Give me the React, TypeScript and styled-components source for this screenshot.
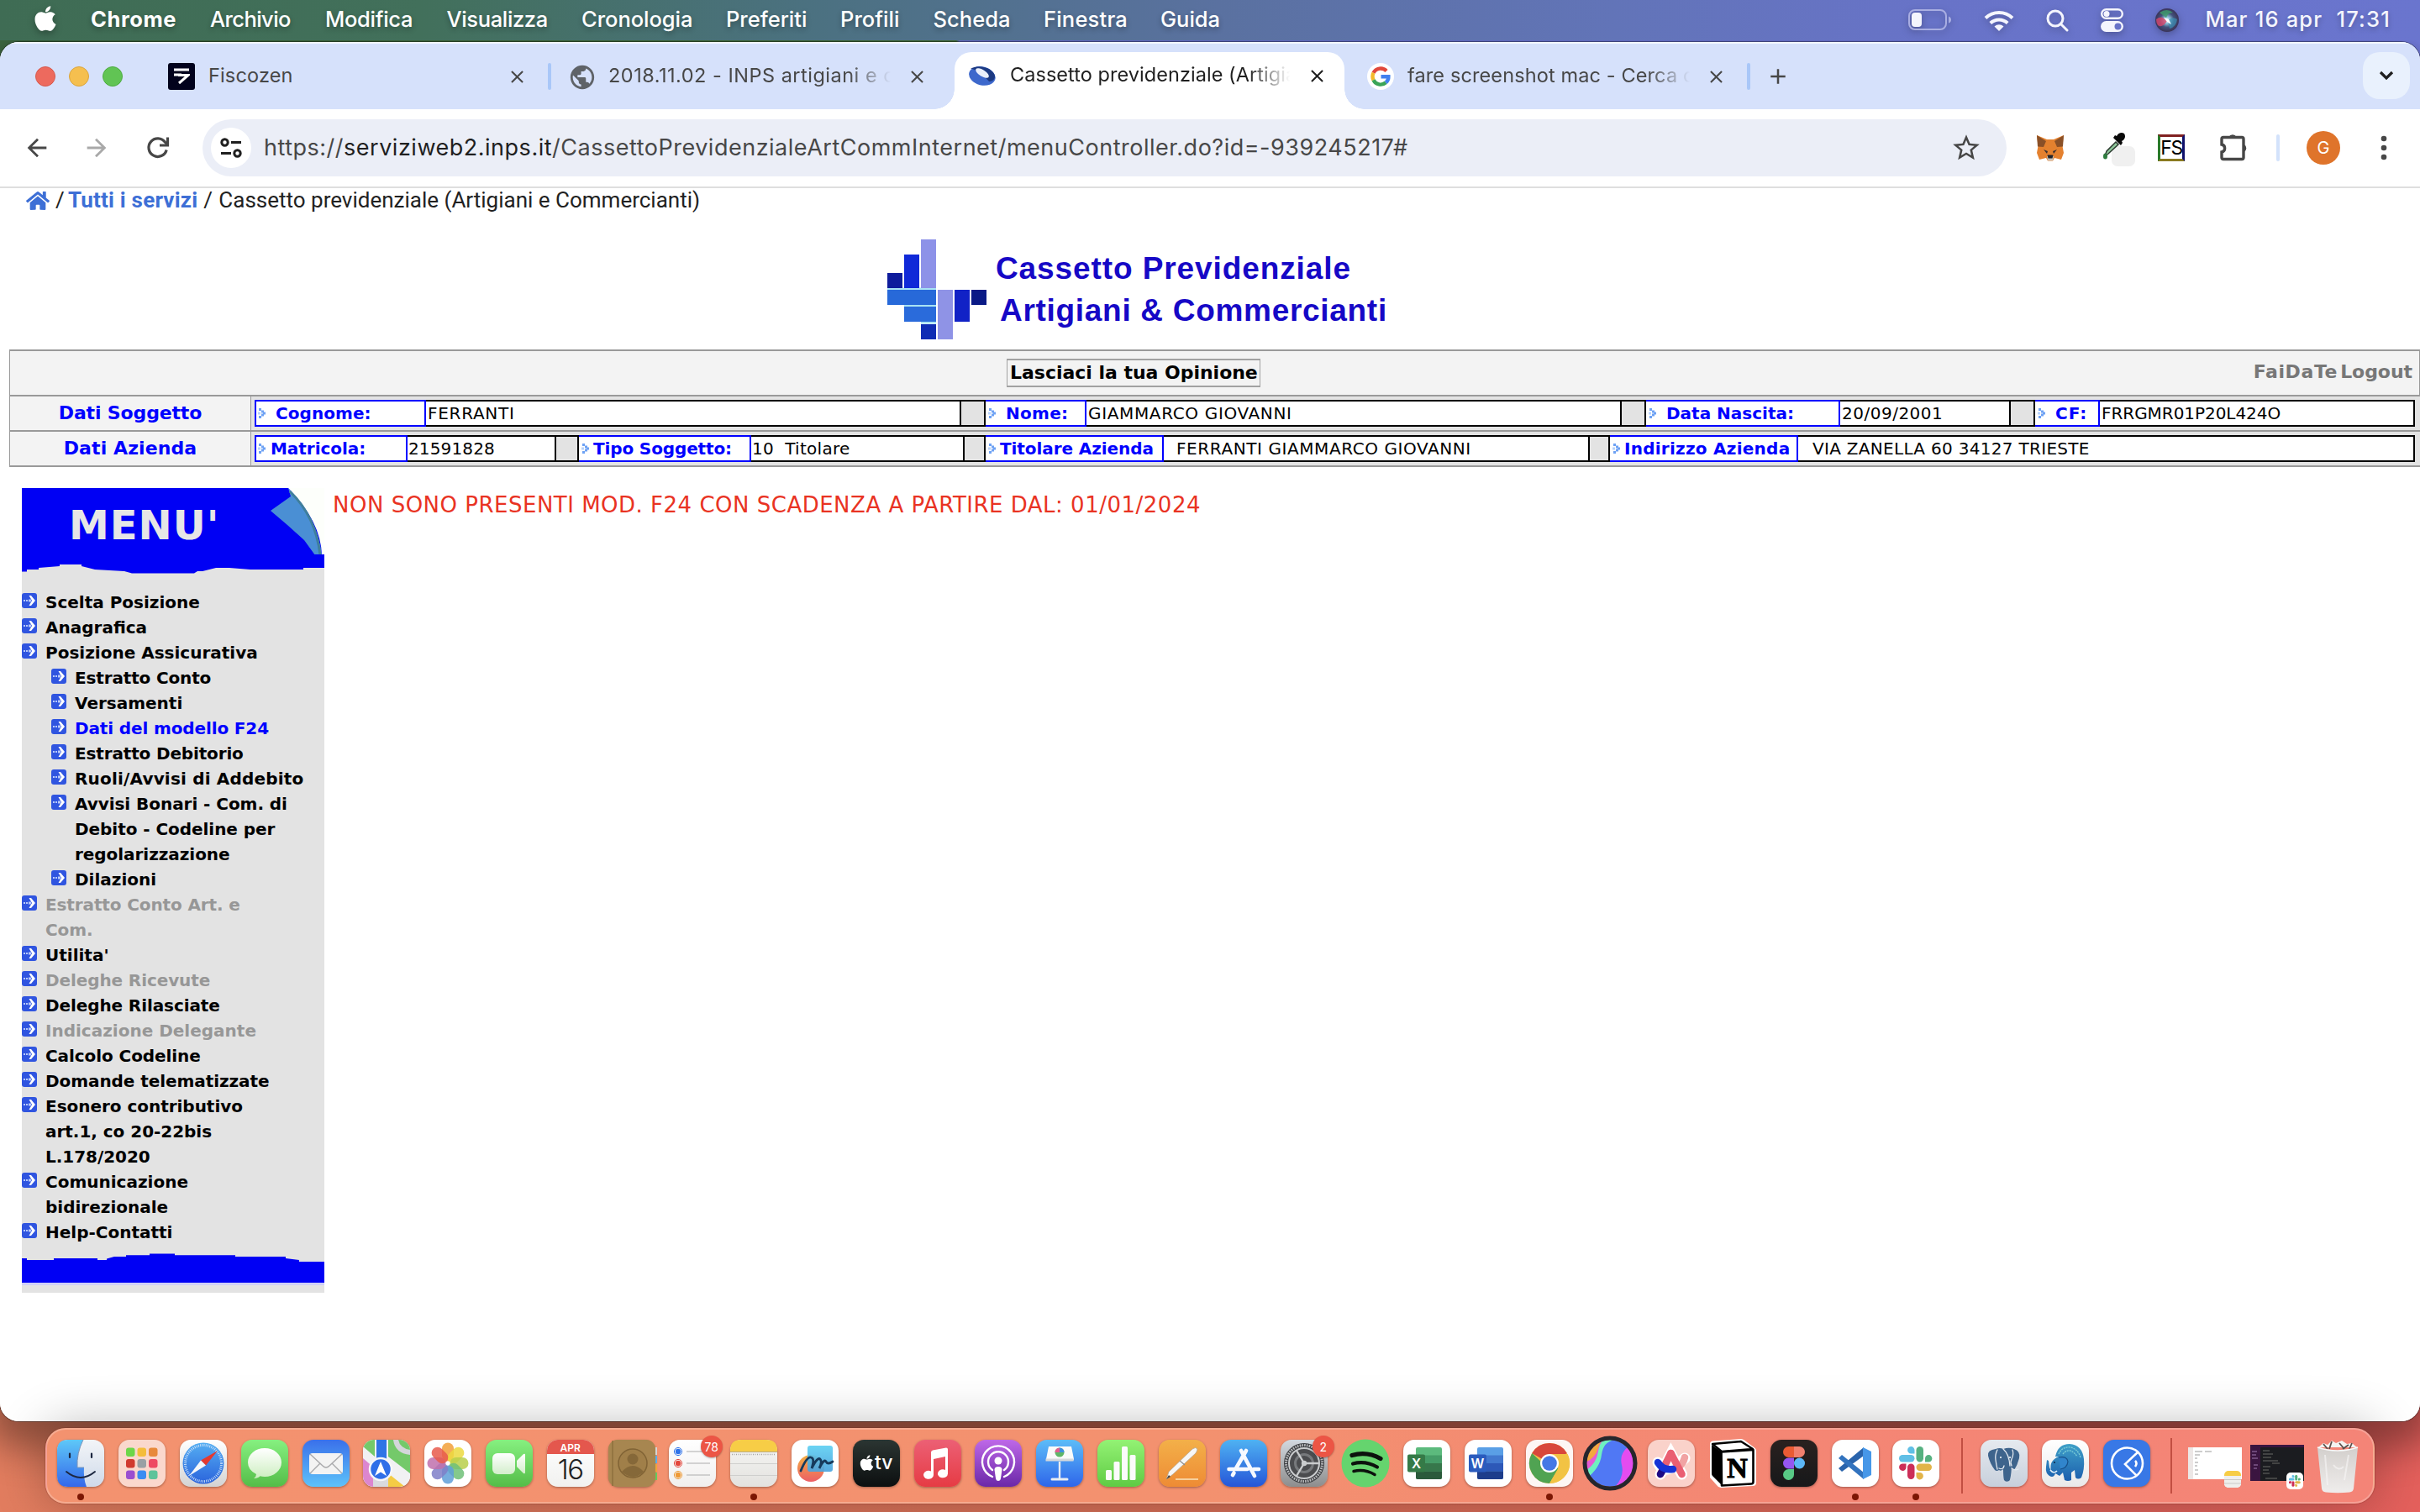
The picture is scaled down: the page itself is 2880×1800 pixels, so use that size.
import React from "react";
import styled, { createGlobalStyle, css } from "styled-components";
import { FaApple, FaHome } from "react-icons/fa";
import { MdArrowBack, MdArrowForward, MdClose, MdAdd, MdStarBorder, MdPublic } from "react-icons/md";

const UI = `Inter, "Liberation Sans", sans-serif`;
const VERDANA = `"DejaVu Sans", "Liberation Sans", sans-serif`;

const GlobalStyle = createGlobalStyle`
  * { box-sizing: border-box; }
  html, body { margin: 0; padding: 0; overflow: hidden; }
  svg { display: block; flex: none; }
`;

/* ---------- desktop ---------- */

const Desktop = styled.div`
  width: 2880px;
  height: 1800px;
  display: grid;
  grid-template-rows: 48px 1644px 108px;
  overflow: hidden;
  font-family: ${UI};
  background:
    linear-gradient(90deg, #426e45 0, #4c7a42 1138px, #7079dd 1142px, #7a83ea 2880px) 0 0 / 100% 300px no-repeat,
    linear-gradient(90deg, #e27d5f 0, #d97058 50%, #e4605c 100%);
`;

const MenuBar = styled.header`
  display: flex;
  align-items: flex-start;
  height: 48px;
  padding: 0 35px 0 37px;
  color: #fff;
  background: linear-gradient(90deg, #3f6c54 0, #42705b 500px, #4b7180 960px, #5a71a0 1450px, #6274b8 1920px, #6873c8 2300px, #6a75ce 2880px);
`;

const AppleMark = styled.span`
  width: 71px;
  padding-top: 5px;
  svg { filter: drop-shadow(0 3px 4px rgba(0, 0, 0, 0.3)); }
`;

const MenuItem = styled.span<{ $w: number; $ls: number; $bold?: boolean }>`
  width: ${(p) => p.$w}px;
  font-size: 25.5px;
  line-height: 46px;
  font-weight: ${(p) => (p.$bold ? 700 : 500)};
  letter-spacing: ${(p) => p.$ls}px;
  white-space: nowrap;
  text-shadow: 0 3px 6px rgba(0, 0, 0, 0.3);
`;

const StatusArea = styled.div`
  margin-left: auto;
  display: flex;
  align-items: center;
  height: 48px;
  gap: 38px;
  svg { filter: drop-shadow(0 3px 4px rgba(0, 0, 0, 0.25)); }
`;

const Clock = styled.span`
  margin-left: -7px;
  font-size: 25.5px;
  line-height: 46px;
  height: 48px;
  font-weight: 500;
  letter-spacing: 1.2px;
  white-space: pre;
  color: #f4f5fd;
  text-shadow: 0 3px 6px rgba(0, 0, 0, 0.25);
`;

/* ---------- browser window ---------- */

const Window = styled.main`
  margin-top: 2px;
  height: 1642px;
  display: flex;
  flex-direction: column;
  border-radius: 22px;
  overflow: hidden;
  background: #fff;
  box-shadow: 0 0 0 1px rgba(0, 0, 0, 0.35), 0 16px 44px 16px rgba(0, 0, 0, 0.36);
  clip-path: inset(-2px 0 -120px 0);
`;

const TabStrip = styled.div`
  flex: none;
  display: flex;
  align-items: center;
  height: 80px;
  background: #d6e1fb;
  border-top: 2px solid #f2f6ff;
  color: #474747;
`;

const Lights = styled.div`
  display: flex;
  gap: 16px;
  width: 200px;
  padding-left: 42px;
`;

const Light = styled.i<{ $c: string; $b: string }>`
  width: 24px;
  height: 24px;
  border-radius: 50%;
  background: ${(p) => p.$c};
  border: 1px solid ${(p) => p.$b};
`;

const Tab = styled.div<{ $w: number; $active?: boolean }>`
  flex: none;
  display: flex;
  align-items: center;
  width: ${(p) => p.$w}px;
  height: 100%;
  ${(p) =>
    p.$active &&
    css`
      position: relative;
      align-self: flex-end;
      height: 68px;
      margin: 0 27px 0 32px;
      padding: 0 20px 12px 16px;
      border-radius: 20px 20px 0 0;
      background: #fff;
      color: #1f1f1f;
      &::before,
      &::after {
        content: "";
        position: absolute;
        bottom: 0;
        width: 24px;
        height: 24px;
      }
      &::before {
        left: -24px;
        background: radial-gradient(circle at 0 0, transparent 23.5px, #fff 24px);
      }
      &::after {
        right: -24px;
        background: radial-gradient(circle at 100% 0, transparent 23.5px, #fff 24px);
      }
    `}
`;

const TabTitle = styled.span<{ $w: number; $ls: number; $fade?: boolean }>`
  width: ${(p) => p.$w}px;
  margin-left: 16px;
  padding-bottom: 2px;
  overflow: hidden;
  white-space: nowrap;
  font-size: 23.5px;
  line-height: 40px;
  letter-spacing: ${(p) => p.$ls}px;
  ${(p) =>
    p.$fade &&
    css`
      mask-image: linear-gradient(90deg, #000 calc(100% - 50px), transparent);
    `}
`;

const TabClose = styled(MdClose)`
  width: 25px;
  height: 25px;
  margin-left: auto;
`;

const TabRule = styled.i<{ $l: number; $r: number }>`
  flex: none;
  width: 4px;
  height: 32px;
  margin: 0 ${(p) => p.$r}px 0 ${(p) => p.$l}px;
  border-radius: 2px;
  background: #a9c7f8;
`;

const ToolRule = styled(TabRule)`
  background: #d3e2fb;
`;

const TabSearch = styled.button`
  display: grid;
  place-items: center;
  width: 56px;
  height: 56px;
  margin: 0 12px 2px auto;
  padding: 0;
  border: 0;
  border-radius: 20px;
  background: #e9f1fd;
  color: #1f1f1f;
`;

const FavBox = styled.span<{ $bg?: string; $round?: boolean }>`
  flex: none;
  display: grid;
  place-items: center;
  width: 32px;
  height: 32px;
  border-radius: ${(p) => (p.$round ? "50%" : "3px")};
  background: ${(p) => p.$bg ?? "transparent"};
`;

const Toolbar = styled.div`
  flex: none;
  display: flex;
  align-items: center;
  height: 94px;
  padding-left: 27px;
  border-bottom: 2px solid #dedede;
  background: #fff;
  color: #474747;
`;

const NavIcon = styled.span<{ $w: number; $dim?: boolean }>`
  width: ${(p) => p.$w}px;
  color: ${(p) => (p.$dim ? "#a9a9a9" : "#474747")};
`;

const Omnibox = styled.div`
  display: flex;
  align-items: center;
  width: 2147px;
  height: 68px;
  padding: 0 29px 0 10px;
  border-radius: 34px;
  background: #ebeef7;
`;

const SiteInfo = styled.span`
  display: grid;
  place-items: center;
  width: 48px;
  height: 48px;
  border-radius: 50%;
  background: #fff;
`;

const Url = styled.span`
  flex: 1;
  margin-left: 15px;
  font-size: 27px;
  line-height: 60px;
  letter-spacing: 0.51px;
  white-space: nowrap;
  b {
    font-weight: 400;
    color: #1f1f1f;
  }
`;

const Extensions = styled.div`
  display: flex;
  align-items: center;
  margin-left: 35px;
`;

const ExtSlot = styled.span<{ $w: number }>`
  width: ${(p) => p.$w}px;
`;

const FsBadge = styled.span`
  display: grid;
  place-items: center;
  width: 32px;
  height: 32px;
  border: 3px solid;
  border-color: #802020 #10106a #8a7a20 #2a7a2a;
  background: #fff;
  color: #000;
  font: 400 23px/26px Inter, sans-serif;
  letter-spacing: -1.5px;
`;

const Avatar = styled.span`
  display: grid;
  place-items: center;
  width: 40px;
  height: 40px;
  border-radius: 50%;
  background: #df742b;
  color: #fff;
  font-size: 20px;
`;

/* ---------- page ---------- */

const Page = styled.section`
  flex: 1;
  display: flex;
  flex-direction: column;
  background: #fff;
  font-family: ${VERDANA};
`;

const Breadcrumb = styled.nav`
  display: flex;
  align-items: center;
  height: 29px;
  padding-left: 31px;
  font: 400 26px/29px Roboto, "Liberation Sans", sans-serif;
  color: #222;
  white-space: pre;
`;

const CrumbLink = styled.a`
  color: #3d6fd6;
  font-weight: 700;
  letter-spacing: 0.2px;
`;

const Slash = styled.span<{ $r?: number }>`
  width: 10px;
  margin: 0 ${(p) => p.$r ?? 8}px 0 7px;
`;

const Banner = styled.div`
  display: flex;
  height: 163px;
  padding: 32px 0 0 1056px;
`;

const BannerText = styled.h1`
  margin: 10px 0 0 9px;
  font: 700 37px/50px "Liberation Sans", Arial, sans-serif;
  color: #1608c6;
  white-space: nowrap;
`;

const BannerLine = styled.span<{ $l: number; $ls: number }>`
  display: block;
  margin-left: ${(p) => p.$l}px;
  letter-spacing: ${(p) => p.$ls}px;
`;

const InfoTable = styled.div`
  margin-left: 11px;
  border-left: 1px solid #999;
  border-bottom: 2px solid #999;
  background: #e3e3e3;
`;

const TopRow = styled.div`
  display: grid;
  grid-template-columns: 1186px 302px 1fr;
  align-items: center;
  height: 54px;
  padding-right: 8px;
  border-top: 2px solid #999;
  border-right: 1px solid #999;
  background: #f3f3f3;
`;

const OpinionButton = styled.button`
  grid-column: 2;
  height: 34px;
  padding: 0 0 0 3px;
  border: 2px solid #a2a2a2;
  border-left-width: 1px;
  border-right-width: 1px;
  background: #f3f3f3;
  font: 700 22px/30px ${VERDANA};
  letter-spacing: -0.02px;
  text-align: left;
  white-space: nowrap;
  color: #000;
`;

const TopLinks = styled.div`
  justify-self: end;
  display: flex;
  gap: 3px;
  margin-bottom: 2px;
  font: 700 22px/30px ${VERDANA};
  color: #777;
`;

const TopLink = styled.a<{ $ls: number }>`
  letter-spacing: ${(p) => p.$ls}px;
`;

const DataRow = styled.div`
  display: flex;
  height: 42px;
  border-top: 2px solid #999;
`;

const RowTitle = styled.div<{ $ls: number }>`
  width: 287px;
  padding-top: 5px;
  border-right: 1px solid #999;
  background: #f3f3f3;
  text-align: center;
  font: 700 22px/30px ${VERDANA};
  letter-spacing: ${(p) => p.$ls}px;
  color: #0000ff;
`;

const Fields = styled.div`
  flex: 1;
  display: flex;
  margin: 4px 6px 4px 4px;
`;

const FieldLabel = styled.span<{ $w: number; $first?: boolean }>`
  flex: none;
  display: flex;
  align-items: center;
  width: ${(p) => p.$w}px;
  padding-left: ${(p) => (p.$first ? 2 : 3)}px;
  border: 2px solid #0000ff;
  border-right-width: 2px;
  border-left-width: ${(p) => (p.$first ? 2 : 0)}px;
  background: #fff;
  color: #0000ff;
`;

const LabelText = styled.b<{ $l: number; $ls: number }>`
  margin-left: ${(p) => p.$l}px;
  font-size: 20px;
  line-height: 24px;
  letter-spacing: ${(p) => p.$ls}px;
  white-space: nowrap;
`;

const FieldValue = styled.span<{ $w?: number; $l: number; $ls: number }>`
  flex: ${(p) => (p.$w ? "none" : "1")};
  width: ${(p) => (p.$w ? `${p.$w}px` : "auto")};
  padding-left: ${(p) => p.$l}px;
  border: 2px solid #000;
  border-left: 0;
  background: #fff;
  color: #000;
  font-size: 20px;
  line-height: 29px;
  letter-spacing: ${(p) => p.$ls}px;
  white-space: pre;
`;

const FieldGap = styled.i<{ $w: number }>`
  flex: none;
  width: ${(p) => p.$w}px;
  border: 2px solid #000;
  border-left: 0;
`;

const Body = styled.div`
  display: flex;
  padding: 25px 0 0 26px;
`;

const Sidebar = styled.aside`
  width: 360px;
  height: 958px;
  background: #e3e3e3;
`;

const MenuHead = styled.div`
  position: relative;
  height: 121px;
`;

const MenuTitle = styled.h2`
  position: absolute;
  left: 56px;
  top: 16px;
  margin: 0;
  font: 700 48px/56px ${VERDANA};
  letter-spacing: 1px;
  color: #e6e6e6;
`;

const MenuList = styled.ul`
  margin: 0;
  padding: 0;
  list-style: none;
`;

const MenuEntry = styled.li<{ $sub?: boolean; $tone?: "active" | "off" }>`
  display: flex;
  gap: 10px;
  padding-left: ${(p) => (p.$sub ? 35 : 0)}px;
  font-size: 20px;
  line-height: 30px;
  font-weight: 700;
  white-space: pre-line;
  color: ${(p) => (p.$tone === "active" ? "#0000ff" : p.$tone === "off" ? "#979797" : "#000")};
  svg { margin-top: 4px; }
`;

const EntryText = styled.span<{ $ls: number }>`
  letter-spacing: ${(p) => p.$ls}px;
`;

const Notice = styled.p`
  margin: 4px 0 0 10px;
  font-size: 26px;
  line-height: 32px;
  letter-spacing: 0.5px;
  color: #e93323;
`;

/* ---------- dock ---------- */

const DockArea = styled.footer`
  padding: 8px 54px 0;
  z-index: 1;
`;

const Dock = styled.div`
  display: flex;
  width: 2772px;
  height: 90px;
  padding-left: 4px;
  border: 2px solid rgba(255, 255, 255, 0.24);
  border-radius: 24px;
  background: linear-gradient(90deg, #f3926f 0, #f3916f 50%, #f48674 75%, #f48477 100%);
  box-shadow: 0 0 0 1px rgba(110, 40, 25, 0.25), 0 0 60px rgba(0, 0, 0, 0.3);
`;

const DockSlot = styled.div<{ $w?: number }>`
  position: relative;
  flex: none;
  display: flex;
  flex-direction: column;
  align-items: center;
  width: ${(p) => p.$w ?? 72.8}px;
  padding-top: 12px;
`;

const Tile = styled.div<{ $bg?: string; $flat?: boolean }>`
  width: 56px;
  height: 56px;
  border-radius: 13px;
  background: ${(p) => p.$bg ?? "#fff"};
  box-shadow: ${(p) => (p.$flat ? "none" : "0 1px 3px rgba(0, 0, 0, 0.35)")};
  svg { overflow: visible; }
`;

const RunningDot = styled.i`
  width: 8px;
  height: 8px;
  margin-top: 8px;
  border-radius: 50%;
  background: #7c1704;
`;

const Badge = styled.span`
  position: absolute;
  top: 7px;
  right: 1px;
  display: grid;
  place-items: center;
  width: 26px;
  height: 26px;
  border-radius: 50%;
  background: #ec5545;
  color: #fff;
  font-size: 14px;
  box-shadow: 0 1px 2px rgba(0, 0, 0, 0.3);
`;

const DockRule = styled.i<{ $l: number; $r: number }>`
  flex: none;
  width: 2px;
  height: 66px;
  margin: 10px ${(p) => p.$r}px 0 ${(p) => p.$l}px;
  background: #c24f42;
`;

const CalMonth = styled.div`
  height: 17px;
  border-radius: 13px 13px 0 0;
  background: #e4574d;
  color: #fff;
  font-size: 12px;
  line-height: 19px;
  font-weight: 600;
  text-align: center;
`;

const CalDay = styled.div`
  font-size: 33px;
  line-height: 37px;
  font-weight: 300;
  letter-spacing: -1.5px;
  text-align: center;
  color: #222;
`;

const TvMark = styled.div`
  display: flex;
  align-items: center;
  justify-content: center;
  height: 56px;
  padding: 0 1px 2px 0;
  color: #fff;
  font-size: 23px;
  line-height: 30px;
  font-weight: 500;
  svg { width: 19px; height: 21px; }
`;

/* ---------- small drawings ---------- */

const Fiscozen = () => (
  <FavBox $bg="#02021c">
    <svg width="20" height="20" viewBox="0 0 20 20">
      <path d="M1 2h18M1 8h9" stroke="#fff" strokeWidth="3" />
      <path d="M6 8.500h12L7 18" fill="none" stroke="#fff" strokeWidth="3" />
    </svg>
  </FavBox>
);

const InpsMark = () => (
  <svg width="34" height="26" viewBox="0 0 34 26">
    <ellipse cx="17" cy="13.500" rx="16" ry="11" fill="#3d68cc" transform="rotate(14 17 13)" />
    <path d="M3 5C14-2 33 6 32 15c-1 4-4 5-7 5C18 12 10 5 3 5z" fill="#1c3a83" />
    <ellipse cx="17" cy="10" rx="9" ry="3.800" fill="#e9effb" transform="rotate(32 17 10)" />
  </svg>
);

const GoogleMark = () => (
  <svg width="24" height="24" viewBox="0 0 24 24" fill="none" strokeWidth="4.400">
    <path d="M19 5.500A9.600 9.600 0 0 0 3.500 7.800" stroke="#e1483b" />
    <path d="M3.500 7.800a9.600 9.600 0 0 0 0 8.400" stroke="#f3b92a" />
    <path d="M3.500 16.200A9.600 9.600 0 0 0 18.300 19.300" stroke="#3aa457" />
    <path d="M18.300 19.300A9 9 0 0 0 21.400 12.200H12.500" stroke="#4180ee" />
  </svg>
);

const Reload = () => (
  <svg width="30" height="30" viewBox="0 0 30 30" fill="none" stroke="#474747" strokeWidth="3.200">
    <path d="M25.200 17.500A10.800 10.800 0 1 1 23.500 8.300L26 11" />
    <path d="M26.500 2.500v9.500H17" />
  </svg>
);

const Tune = () => (
  <svg width="26" height="24" viewBox="0 0 26 24" fill="none" stroke="#1f1f1f" strokeWidth="3">
    <circle cx="5.500" cy="5.500" r="3.700" />
    <path d="M13 5.500h12M1 18.500h12" />
    <circle cx="20.500" cy="18.500" r="3.700" />
  </svg>
);

const Fox = () => (
  <svg width="34" height="32" viewBox="0 0 34 32">
    <path d="M1 1l12 5h8L33 1l-1.500 13L33 22l-3 8-8-2-2 3.500h-6L12 28l-8 2-3-8 1.500-8z" fill="#e4812f" />
    <path d="M1 1l11 7-3 7-7-.5zM33 1L22 8l3 7 7-.5z" fill="#8a5027" />
    <path d="M9 18l5 2-1 3zM25 18l-5 2 1 3z" fill="#3a3030" />
    <path d="M13 26h8l-1 5h-6z" fill="#c9c2b8" />
    <path d="M13.500 24.500h7l-1 4h-5z" fill="#20242c" />
  </svg>
);

const Dropper = () => (
  <svg width="40" height="44" viewBox="0 0 40 44">
    <rect x="11" y="20" width="28" height="24" rx="7" fill="#f0f0f0" />
    <path d="M16 15L5 26l-2 6 4-3 12-11z" fill="#8fc79b" stroke="#2c3a30" strokeWidth="1.500" />
    <path d="M13 10l9 9 2-3-1-2c4-2 5-6 3-9-3-2-7-1-9 3l-2-1z" fill="#0a0a0a" />
    <ellipse cx="3.500" cy="32" rx="2.500" ry="3.500" fill="#2f7d3f" />
  </svg>
);

const Puzzle = () => (
  <svg width="36" height="40" viewBox="0 0 36 40">
    <path d="M5 7.500h22q2 0 2 2v22q0 2-2 2H5q-2 0-2-2v-6.500a4.600 4.600 0 0 0 0-9V9.500q0-2 2-2z" fill="none" stroke="#474747" strokeWidth="3.400" />
    <path d="M11.500 7a5 5 0 0 1 9 0zM29.500 16a5 5 0 0 1 0 9z" fill="#474747" />
  </svg>
);

const Battery = () => (
  <svg width="52" height="26" viewBox="0 0 52 26">
    <rect x="1" y="1" width="44" height="23" rx="7" fill="none" stroke="#a9aee2" strokeWidth="2" />
    <rect x="4" y="4" width="12" height="17" rx="4" fill="#f4f5fd" />
    <path d="M48 8.500q3 1 3 4t-3 4z" fill="#a9aee2" />
  </svg>
);

const Wifi = () => (
  <svg width="36" height="27" viewBox="0 0 36 27" fill="none" stroke="#f4f5fd" strokeWidth="4">
    <path d="M2 10.500a23 23 0 0 1 32 0M7.800 16.500a14.800 14.800 0 0 1 20.400 0" />
    <path d="M18 26l-5.500-5.600a8 8 0 0 1 11 0z" fill="#f4f5fd" stroke="none" />
  </svg>
);

const Magnifier = () => (
  <svg width="27" height="27" viewBox="0 0 27 27" fill="none" stroke="#f4f5fd" strokeWidth="3">
    <circle cx="11" cy="11" r="9" />
    <path d="M17.500 17.500L25 25" strokeLinecap="round" />
  </svg>
);

const ControlCentre = () => (
  <svg width="27" height="28" viewBox="0 0 27 28">
    <rect x="1.200" y="1.200" width="24.600" height="10.600" rx="5.300" fill="none" stroke="#f4f5fd" strokeWidth="2.400" />
    <circle cx="7" cy="6.500" r="3.500" fill="#f4f5fd" />
    <rect y="15" width="27" height="13" rx="6.500" fill="#f4f5fd" />
    <circle cx="20.500" cy="21.500" r="4" fill="#6873c8" />
  </svg>
);

const Siri = () => (
  <svg width="28" height="28" viewBox="0 0 28 28">
    <defs>
      <radialGradient id="siri"><stop offset="0" stopColor="#fff" /><stop offset=".25" stopColor="#8fc6dc" /><stop offset=".6" stopColor="#42527c" /><stop offset="1" stopColor="#3a3358" /></radialGradient>
    </defs>
    <circle cx="14" cy="14" r="14" fill="url(#siri)" />
    <path d="M1 13q6-6 13 2-6 9-11 5-2-3-2-7z" fill="#d8466c" opacity=".8" />
    <path d="M5 5q9-6 16 0-6 0-8 6z" fill="#3f9c6c" opacity=".8" />
    <path d="M15 14q6-5 11-1-1 9-9 11z" fill="#3c8fb4" opacity=".7" />
    <path d="M10 11l6 2 3 6-5-3z" fill="#fff" />
  </svg>
);

const blocks: [number, number, number, number, string][] = [
  [0, 40, 18, 18, "#0e1c9c"], [20, 18, 18, 40, "#1029d8"], [40, 0, 18, 58, "#8d92e8"],
  [0, 60, 58, 18, "#2769d9"], [20, 80, 38, 18, "#2a6bdb"], [40, 101, 18, 18, "#0f2cb4"],
  [60, 60, 18, 59, "#8f93e6"], [80, 60, 18, 38, "#1122c6"], [100, 60, 18, 18, "#0a1a86"],
];

const InpsCross = () => (
  <svg width="120" height="120" viewBox="0 0 120 120">
    <path d="M0 59h58M20 79h38M40 99h18" stroke="#a9e3f4" strokeWidth="3" />
    {blocks.map(([x, y, w, h, c], i) => (
      <rect key={i} x={x} y={y} width={w} height={h} fill={c} />
    ))}
  </svg>
);

const Marker = () => (
  <svg width="9" height="12" viewBox="0 0 9 12">
    <path d="M1 0h3v3H1zM4 2.500h3v3H4zM6 4.500h3v3H6zM4 6.500h3v3H4zM1 9h3v3H1z" fill="#6ea2f4" />
    <path d="M0 4.500h3v3H0z" fill="#b7d2fb" />
  </svg>
);

const Bullet = () => (
  <svg width="18" height="18" viewBox="0 0 18 18">
    <rect width="18" height="18" rx="3" fill="#3055e0" />
    <path d="M2 8h2v2H2zM5 8h2v2H5zM8 7.500h3v3H8z" fill="#b9c9fa" />
    <path d="M8.500 3h2.500l5 6-5 6H8.500l3.500-6z" fill="#fff" />
  </svg>
);

const MenuHeadArt = () => (
  <svg width="360" height="104" viewBox="0 0 360 104">
    <rect width="360" height="80" fill="#0000f4" />
    <path d="M317 0h43v80h-3Q356 40 317 0z" fill="#fdfffb" />
    <path d="M317 0l3 10-24 17 20 17 20 18 13 18h8Q352 36 317 0z" fill="#4a8fd4" />
    <path d="M319 4Q350 34 355 80" fill="none" stroke="#3f7f9c" strokeWidth="3" />
    <path d="M0 79H360V95H335V97H272L247 95H231L215 99H209L205 101.500H131L122 99L87 97L71 93V91H45V93L20 95V97H6V99.500H0z" fill="#0000f4" />
  </svg>
);

const MenuFootArt = () => (
  <svg width="360" height="52" viewBox="0 0 360 52">
    <path d="M0 16H6V18H38V16H90V18H101V16.500L110 14H124V12.300H152V10.500H182V12.300H254V14H314V16L330 18V20H360V45H0z" fill="#0000f4" />
    <path d="M0 46.500h360" stroke="#cfcff8" strokeWidth="3" />
  </svg>
);

/* ---------- dock drawings ---------- */

const Art = ({ children }: { children: React.ReactNode }) => (
  <svg width="56" height="56" viewBox="0 0 56 56">{children}</svg>
);

const Grad = ({ id, a, b }: { id: string; a: string; b: string }) => (
  <linearGradient id={id} x1="0" y1="0" x2="0" y2="1"><stop offset="0" stopColor={a} /><stop offset="1" stopColor={b} /></linearGradient>
);

const Finder = () => (
  <Art>
    <Grad id="fnd" a="#5ec8f8" b="#3468ea" />
    <path d="M13 0H31Q23 16 24 33h8Q31 46 35 56H13Q0 56 0 43V13Q0 0 13 0z" fill="url(#fnd)" />
    <path d="M15 16.500v4.500M41 16.500v4.500" stroke="#1c2740" strokeWidth="2.200" strokeLinecap="round" />
    <path d="M11 38q17 14 34 0" fill="none" stroke="#1c2740" strokeWidth="1.900" strokeLinecap="round" />
    <path d="M31 0Q23 16 24 33h8" fill="none" stroke="#7f96b8" strokeWidth="1" />
  </Art>
);

const launchColors = ["#6dd64a", "#f4bd3c", "#e8893a", "#d13a2f", "#9aa0a4", "#ee4a62", "#9a4fd0", "#3a8cf2", "#5fc39a"];
const Launchpad = () => (
  <Art>{launchColors.map((c, i) => <rect key={c} x={9 + (i % 3) * 13.500} y={9.500 + Math.floor(i / 3) * 13.500} width="10.500" height="10.500" rx="3" fill={c} />)}</Art>
);

const Safari = () => (
  <Art>
    <Grad id="saf" a="#55aef2" b="#2a63dc" />
    <circle cx="28" cy="28" r="24.500" fill="url(#saf)" />
    <circle cx="28" cy="28" r="21.500" fill="none" stroke="#cfe4fa" strokeWidth="3" strokeDasharray=".9 1.350" />
    <path d="M45 13L25 24.500l6 6z" fill="#e5392f" />
    <path d="M11 43l14-18.500 6 6z" fill="#f4f6fa" />
  </Art>
);

const Messages = () => (
  <Art>
    <Grad id="msg" a="#ffffff" b="#cdeec0" />
    <path d="M28 10c11 0 20 7.500 20 17s-9 17-20 17q-3 0-5.500-.7Q20 46 15 46q3-2 3-5-10-5-10-14c0-9.500 9-17 20-17z" fill="url(#msg)" />
  </Art>
);

const Mail = () => (
  <Art>
    <rect x="8" y="16" width="40" height="25" rx="4" fill="#f3f3f3" />
    <path d="M9 17l15 14q4 4 8 0l15-14M9 40l12-12M47 40L35 28" fill="none" stroke="#a9a9ac" strokeWidth="1.400" />
  </Art>
);

const Maps = () => (
  <Art>
    <clipPath id="mapc"><rect width="56" height="56" rx="13" /></clipPath>
    <g clipPath="url(#mapc)">
      <rect width="56" height="56" fill="#f1f1f3" />
      <path d="M0 0h14v20L0 8z" fill="#74c96a" />
      <path d="M30 0h26v40L30 20z" fill="#74c96a" />
      <path d="M56 0v18q-18-2-20-18z" fill="#d4d6da" />
      <path d="M56 0v12q-12-2-14-12z" fill="#74c96a" />
      <path d="M0 22l14 12v22H0z" fill="#dc86cf" />
      <path d="M30 40l20 16H30z" fill="#f4cc45" />
      <path d="M16 0h12v26H16z" fill="#2f74e6" />
      <path d="M12 30h18v26H12z" fill="#d9dade" />
    </g>
    <circle cx="21" cy="35" r="13" fill="#2f6fe8" stroke="#f6f6f8" strokeWidth="2.500" />
    <path d="M21 26l7 17-7-4.500-7 4.500z" fill="#fff" />
  </Art>
);

const petals = ["#f2a03a", "#ecd940", "#b9cf4a", "#6fbf78", "#5f9fd8", "#7f7fc8", "#bf70ad", "#e85a4c"];
const Photos = () => (
  <Art>{petals.map((c, i) => <rect key={c} x="21" y="3.500" width="14" height="22" rx="7" fill={c} opacity=".85" transform={`rotate(${i * 45} 28 28)`} />)}</Art>
);

const FaceTime = () => (
  <Art>
    <Grad id="ftm" a="#ffffff" b="#d3eecb" />
    <rect x="8" y="16" width="27" height="25" rx="6" fill="url(#ftm)" />
    <path d="M37 25l8-8q2-1 2 1v21q0 2-2 1l-8-8z" fill="url(#ftm)" />
  </Art>
);

const Contacts = () => (
  <Art>
    <path d="M54 9h4v9h-4z" fill="#d5d5d3" /><path d="M54 19h4v9h-4z" fill="#59aee6" /><path d="M54 29h4v9h-4z" fill="#f0a43a" /><path d="M54 39h4v9h-4z" fill="#66c95c" />
    <rect x="0" y="0" width="56" height="56" rx="11" fill="#a78650" />
    <path d="M5 1v54" stroke="#8d6f3e" strokeWidth="1.500" />
    <circle cx="29" cy="28" r="17" fill="#a07f49" stroke="#806335" strokeWidth="1.500" />
    <circle cx="29" cy="23" r="6.500" fill="#856839" />
    <path d="M16 38q13-14 26 0-12 12-26 0z" fill="#856839" />
  </Art>
);

const Reminders = () => (
  <Art>
    {["#2f73ea", "#e3473c", "#ee9a36"].map((c, i) => (
      <g key={c}>
        <circle cx="11" cy={14 + i * 14} r="3.200" fill={c} />
        <circle cx="11" cy={14 + i * 14} r="4.600" fill="none" stroke={c} strokeWidth="1" />
        <path d={`M21 ${14 + i * 14}h28`} stroke="#bdbdbd" strokeWidth="1.300" />
      </g>
    ))}
  </Art>
);

const Notes = () => (
  <Art>
    <path d="M0 14V13Q0 0 13 0h30q13 0 13 13v1z" fill="#f7cd46" />
    <path d="M0 14.500h56" stroke="#b9ab84" strokeWidth="1.200" />
    <path d="M2 17.500h52" stroke="#a5a5a5" strokeWidth="1.500" strokeDasharray="1 1.500" />
    <path d="M0 28.500h56M0 42.500h56" stroke="#cfcfcd" strokeWidth="1.200" />
  </Art>
);

const Freeform = () => (
  <Art>
    <Grad id="frc" a="#f4b042" b="#ec5f66" /><Grad id="frs" a="#5fd0f2" b="#4aa3de" />
    <circle cx="23" cy="34" r="16" fill="url(#frc)" />
    <rect x="19" y="7" width="30" height="31" rx="3" fill="url(#frs)" opacity=".92" />
    <path d="M11 37Q18 20 23 21T24 34Q31 20 34 23T33 34Q39 22 41 26T49 26" fill="none" stroke="#173a5c" strokeWidth="2.800" strokeLinecap="round" />
  </Art>
);

const Music = () => (
  <Art>
    <path d="M20 15q0-2 2-2.500l16-3q2 0 2 2v29a6 5 0 1 1-3-4.500V20l-14 3v19a6 5 0 1 1-3-4.500z" fill="#fff" />
  </Art>
);

const Podcasts = () => (
  <Art>
    <g fill="none" stroke="#fff" strokeWidth="2.400" strokeLinecap="round">
      <path d="M21 44a19 19 0 1 1 14 0" /><path d="M21 36a12 12 0 1 1 14 0" />
    </g>
    <circle cx="28" cy="25" r="4.500" fill="#fff" />
    <path d="M28 32q4.500 0 4.500 3.500L31 46q-.5 3-3 3t-3-3l-1.500-10.500Q23.500 32 28 32z" fill="#fff" />
  </Art>
);

const Keynote = () => (
  <Art>
    <path d="M15 8h27l3 15q0 2-2 2H14q-2 0-2-2z" fill="#fafafa" />
    <path d="M11.500 22.500h33v3h-33z" fill="#d5d8dc" />
    <circle cx="28" cy="15" r="5.500" fill="#5fb667" /><path d="M28 15V9.500a5.500 5.500 0 0 1 5.500 5.500z" fill="#3f8fe0" /><path d="M28 15h-5.500A5.500 5.500 0 0 1 28 9.500z" fill="#e35d8f" />
    <path d="M28 26v20" stroke="#e8ecf2" strokeWidth="2.400" /><path d="M19 47h18" stroke="#e8ecf2" strokeWidth="3" strokeLinecap="round" />
  </Art>
);

const Numbers = () => (
  <Art>
    {[[10, 36, 12], [19.5, 26, 22], [29, 8, 40], [38.5, 18, 30]].map(([x, y, h]) => <rect key={x} x={x} y={y} width="7" height={h} rx="1.500" fill="#fbfbfb" />)}
  </Art>
);

const Pages = () => (
  <Art>
    <path d="M9 47l3-9L40 11q4-3 6 0 0 2-2 5L17 41z" fill="#f7f7f7" stroke="#b9a489" strokeWidth=".8" />
    <path d="M25 25l6 5" stroke="#8d8d8d" strokeWidth="1.200" /><path d="M9 47l3-5 2 2z" fill="#444" />
    <path d="M20 47h27" stroke="#f7d09c" strokeWidth="2" />
  </Art>
);

const AppStore = () => (
  <Art>
    <g stroke="#f6f9ff" strokeWidth="4.600" strokeLinecap="round"><path d="M31 13L19 34M25 13l16 30M15 42l1.500-2.500M10.500 35h22M40 35h6" /></g>
  </Art>
);

const Settings = () => (
  <Art>
    <circle cx="28" cy="28" r="24" fill="#3c3e42" />
    <circle cx="28" cy="28" r="21.500" fill="none" stroke="#b9bbbd" strokeWidth="3" strokeDasharray="1.600 1.200" />
    <circle cx="28" cy="28" r="18" fill="#4b4c4f" stroke="#c9cbcd" strokeWidth="2" />
    <circle cx="28" cy="28" r="10.500" fill="none" stroke="#77797c" strokeWidth="3" />
    <path d="M28 28h17M28 28l-9-15M28 28l-9 15" stroke="#c9cbcd" strokeWidth="2.400" /><circle cx="28" cy="28" r="3.200" fill="#c9cbcd" />
  </Art>
);

const Spotify = () => (
  <Art>
    <circle cx="28" cy="28" r="28.500" fill="#65d46e" />
    <g fill="none" stroke="#0c120d" strokeLinecap="round"><path d="M12 18.500q18-5 34 4" strokeWidth="5.200" /><path d="M13 28.500q15-4 29 4" strokeWidth="4.200" /><path d="M14 37.500q13-3 25 4" strokeWidth="3.500" /></g>
  </Art>
);

const Office = ({ letter, c }: { letter: string; c: string[] }) => (
  <Art>
    <rect x="15" y="9" width="31" height="38" rx="2" fill={c[0]} />
    <path d="M15 18.500h31V28H15z" fill={c[1]} /><path d="M15 28h31v9.500H15z" fill={c[2]} /><path d="M15 37.500h31V45q0 2-2 2H17q-2 0-2-2z" fill={c[3]} />
    <rect x="5" y="17.500" width="21" height="21" rx="2" fill={c[4]} />
    <text x="15.500" y="33.500" textAnchor="middle" fontFamily="Inter, sans-serif" fontWeight="600" fontSize="15.500" fill="#fff">{letter}</text>
  </Art>
);

const ChromeIcon = () => (
  <Art>
    <circle cx="28" cy="28" r="24" fill="#f2c344" />
    <path d="M28 28L7.200 16A24 24 0 0 1 48.800 16z" fill="#d8473b" />
    <path d="M28 28l-8 0L7.200 16a24 24 0 0 0 20.800 36l10.500-18z" fill="#50a352" />
    <path d="M28 17h21.500a24 24 0 0 1-21.500 35l10.500-18z" fill="#f2c344" />
    <circle cx="28" cy="28" r="11" fill="#fff" /><circle cx="28" cy="28" r="8.800" fill="#4478e6" />
  </Art>
);

const Orb = () => (
  <Art>
    <linearGradient id="orb" x1="0" y1=".25" x2="1" y2=".4">
      <stop offset="0" stopColor="#f4a04c" /><stop offset=".14" stopColor="#e857d8" /><stop offset=".26" stopColor="#6ff0c4" /><stop offset=".38" stopColor="#4c86f6" /><stop offset=".62" stopColor="#5b74f4" /><stop offset=".78" stopColor="#e44ef0" /><stop offset="1" stopColor="#e64cf0" />
    </linearGradient>
    <clipPath id="orbc"><circle cx="28" cy="28" r="28" /></clipPath>
    <g clipPath="url(#orbc)">
      <circle cx="28" cy="28" r="28" fill="#5078f4" />
      <path d="M56 4Q38 14 42 30T30 60H60V0z" fill="#e44cf0" />
      <path d="M0 46Q16 34 18 18T34 0H0z" fill="#6ff0c0" />
      <path d="M0 36Q12 28 14 14T24 0H0z" fill="#e65ad4" />
      <path d="M0 26Q10 22 14 10T20 0H0z" fill="#f3a83f" />
    </g>
    <circle cx="28" cy="28" r="30" fill="none" stroke="#26262c" strokeWidth="5" />
  </Art>
);

const Arc = () => (
  <Art>
    <g fill="none" strokeLinecap="round" strokeWidth="13" stroke="#fff"><path d="M15 41L27.500 17l13 24M12 27q8 18 32-5" /></g>
    <g fill="none" strokeLinecap="round" strokeWidth="8.500">
      <path d="M44 21q-2 8-8 12" stroke="#f1a3a3" /><path d="M27.500 16l13 25" stroke="#ea5f72" /><path d="M27.500 16L15 41" stroke="#ea5f72" />
      <path d="M19 34l-4 7" stroke="#1b0a86" /><path d="M12 27q6 10 18 8" stroke="#1733d6" />
    </g>
  </Art>
);

const NotionIcon = () => (
  <Art>
    <path d="M1 5q0-3 3-3.500L38-1q2 0 4 1.500l12 9q2 1 2 4V51q0 4-4 4l-38 2q-3 0-5-3L1 45z" fill="#fff" />
    <path d="M3 6l11 8v39L4 43q-1-1-1-3z" fill="#000" />
    <path d="M4 5l34-3 14 9-37 3z" fill="#fff" stroke="#000" strokeWidth="2.400" strokeLinejoin="round" />
    <path d="M14.500 14.500l38-2.500v38q0 2.500-2.500 2.500l-35 2z" fill="#fff" stroke="#000" strokeWidth="2.600" strokeLinejoin="round" />
    <text x="33.500" y="45" textAnchor="middle" fontFamily="Liberation Serif, serif" fontWeight="700" fontSize="34" fill="#000" stroke="#000" strokeWidth="1">N</text>
  </Art>
);

const FigmaIcon = () => (
  <Art>
    <path d="M28 8h-6.500a6.500 6.500 0 0 0 0 13H28z" fill="#ea5b34" /><path d="M28 8h6.500a6.500 6.500 0 0 1 0 13H28z" fill="#f0806f" />
    <path d="M28 21.500h-6.500a6.500 6.500 0 0 0 0 13H28z" fill="#9656f0" /><circle cx="34.500" cy="28" r="6.500" fill="#5cb7f7" />
    <path d="M28 35h-6.500a6.500 6.500 0 1 0 6.500 6.500z" fill="#58c985" />
  </Art>
);

const VsCode = () => (
  <Art>
    <path d="M38 9L8 34l4 4 26-19z" fill="#2a64ac" />
    <path d="M8 22l4-4 26 21v8z" fill="#3273be" />
    <path d="M37 9l10 5v28l-10 5z" fill="#4697e8" />
  </Art>
);

const SlackShape = () => (
  <g>
    <g fill="#60bfe6"><rect x="8" y="18" width="18.500" height="8.500" rx="4.200" /><path d="M26.500 16.500V12.500a4.200 4.200 0 1 0-4.200 4z" /></g>
    <g fill="#56b180"><rect x="28.500" y="8" width="8.500" height="18.500" rx="4.200" /><path d="M39 26.500h4a4.200 4.200 0 1 0-4-4.200z" /></g>
    <g fill="#e2b449"><rect x="28.500" y="28.500" width="18.500" height="8.500" rx="4.200" /><path d="M28.500 39v4a4.200 4.200 0 1 0 4.200-4z" /></g>
    <g fill="#cc2e58"><rect x="18" y="28.500" width="8.500" height="18.500" rx="4.200" /><path d="M16.500 28.500h-4a4.200 4.200 0 1 0 4 4.200z" /></g>
  </g>
);

const Postgres = () => (
  <Art>
    <path d="M18 11q5-2 9 0 7-2.500 13 0 8 3 6 11-2 8-6 14-3-1-3-4-1 16-3 17-4 2-6-1-1-4-1-13-3 3-5 1-3 2-5 0-6-8-8-17-1-7 9-8z" fill="#3e648c" />
    <path d="M20 12q-3 6-2 12 1 7 2 11M27 11q7 6 8 20M38 12q2 5-1 11-2 4 0 8M22 34q5 2 6-3M37 34q4 3 8 1" fill="none" stroke="#e3e9f0" strokeWidth="1.300" strokeLinecap="round" />
    <circle cx="24" cy="21" r="1" fill="#fff" /><circle cx="35" cy="21" r="1" fill="#fff" />
  </Art>
);

const BlueElephant = () => (
  <Art>
    <Grad id="ele" a="#3fa0c8" b="#1c5fae" />
    <path d="M16 20Q19 5 33 5q15 1 17 18 1 12-3 22-4 3-7 0l-1-9-4 3v9q-4 2-8 0l-2-9-4 4-5-3q-2 6-7 3-5-3-4-11l1-8 2 1 1 8 2 4q-3-12 9-17z" fill="url(#ele)" />
    <path d="M20 21q10-2 11 5-1 8-9 9" fill="#3185cc" stroke="#174f88" strokeWidth="1.200" />
    <path d="M20 17Q24 8 34 9q9 2 12 12M25 17q4-5 9-4 5 2 8 7" fill="none" stroke="#7fd0d8" strokeWidth="1.300" strokeDasharray="2 1" />
    <path d="M10 36q4 5 8 1" fill="none" stroke="#eaf4fb" strokeWidth="1.600" /><circle cx="15" cy="27" r="1.100" fill="#0d2c50" />
  </Art>
);

const BlueClock = () => (
  <Art>
    <g fill="none" stroke="#fff" strokeWidth="2.600"><circle cx="28.500" cy="28" r="18.500" /><path d="M42 14L26 29l14 14M38 25q3 3 0 7" /></g>
  </Art>
);

const Thumb = styled.div<{ $dark?: boolean }>`
  position: relative;
  width: 64px;
  height: ${(p) => (p.$dark ? 43 : 38)}px;
  margin-top: ${(p) => (p.$dark ? 6 : 9)}px;
  background: ${(p) => (p.$dark ? "linear-gradient(90deg, #3a1540 0 12px, #1b1c20 12px)" : "linear-gradient(90deg, #ece7e6 0 6px, #fff 6px)")};
`;

const ThumbBadge = styled.span`
  position: absolute;
  right: 1px;
  bottom: -10px;
  width: 20px;
  height: 20px;
  border-radius: 5px;
  overflow: hidden;
  background: #fff;
`;

const NotesThumb = () => (
  <Thumb>
    <svg width="64" height="38" viewBox="0 0 64 38"><path d="M8 5h9M20 5h8M8 9h6M8 13h3M8 18h4M8 22h3M8 27h4M8 32h4" stroke="#9b9b9b" strokeWidth="1" /></svg>
    <ThumbBadge><svg width="20" height="20"><path d="M0 0h20v6H0z" fill="#f7cd46" /><path d="M0 6h20v14H0z" fill="#efefed" /><path d="M0 10.500h20M0 15h20" stroke="#c9c9c7" /></svg></ThumbBadge>
  </Thumb>
);

const SlackThumb = () => (
  <Thumb $dark>
    <svg width="64" height="43" viewBox="0 0 64 43">
      <path d="M0 0h64v3H0z" fill="#3a1540" />
      <path d="M15 7h8M15 11h12M15 15h10M15 19h18M26 22h9M15 26h9M15 30h7M15 34h8M18 40h14" stroke="#6b6a66" strokeWidth="1.200" />
      <path d="M2 8h6M2 12h5M2 16h7M4 24h5M4 28h4" stroke="#a07ab0" strokeWidth="1" />
    </svg>
    <ThumbBadge><svg width="20" height="20" viewBox="0 0 56 56"><SlackShape /></svg></ThumbBadge>
  </Thumb>
);

const Trash = () => (
  <svg width="50" height="64" viewBox="0 0 50 64">
    <Grad id="trs" a="#d3cfcc" b="#efedec" />
    <path d="M2 9l6-5 5 2 5-5 5 3 7-3 6 4 6-1 6 5z" fill="#f4f3f1" />
    <path d="M8 5l5 6M18 2l-3 9M27 4l6 7M38 6l-7 5M42 4l-3 7" stroke="#5b4f4c" strokeWidth="1.800" />
    <path d="M1 9l5 49q.5 4 5 4.500 14 1.500 28 0 4.500-.5 5-4.500L49 9q-24 8-48 0z" fill="url(#trs)" />
    <path d="M1 9q24 8 48 0" fill="none" stroke="#f8f8f8" strokeWidth="1.600" />
    <path d="M10 18l3 36M38 18l-5 30M20 30q6 8 12 2" stroke="#f8f7f6" strokeWidth="2" fill="none" opacity=".6" />
  </svg>
);

type DockApp = { name: string; bg?: string; flat?: boolean; art: React.ReactNode; dot?: boolean; badge?: string };

const apps: DockApp[] = [
  { name: "finder", bg: "linear-gradient(#f3f5f8, #cfdaea)", art: <Finder />, dot: true },
  { name: "launchpad", bg: "rgba(250, 228, 222, 0.85)", art: <Launchpad /> },
  { name: "safari", bg: "linear-gradient(#fff, #d3d3d3)", art: <Safari /> },
  { name: "messages", bg: "linear-gradient(#86f080, #54bd48)", art: <Messages /> },
  { name: "mail", bg: "linear-gradient(#3a70ea, #5dc2fa)", art: <Mail /> },
  { name: "maps", art: <Maps /> },
  { name: "photos", art: <Photos /> },
  { name: "facetime", bg: "linear-gradient(#86f080, #54bd48)", art: <FaceTime /> },
  { name: "calendar", bg: "linear-gradient(#fff, #f1f1ef)", art: <><CalMonth>APR</CalMonth><CalDay>16</CalDay></> },
  { name: "contacts", art: <Contacts />, bg: "#a78650" },
  { name: "reminders", bg: "linear-gradient(#fff, #f0efee)", art: <Reminders />, badge: "78" },
  { name: "notes", bg: "linear-gradient(#f7f7f5, #e3e2df)", art: <Notes />, dot: true },
  { name: "freeform", art: <Freeform /> },
  { name: "tv", bg: "linear-gradient(#2b3532, #0c0f10)", art: <TvMark><FaApple />tv</TvMark> },
  { name: "music", bg: "linear-gradient(#ec6075, #e63b44)", art: <Music /> },
  { name: "podcasts", bg: "linear-gradient(#be68e8, #6b28a8)", art: <Podcasts /> },
  { name: "keynote", bg: "linear-gradient(#5cbcf8, #2e66ea)", art: <Keynote /> },
  { name: "numbers", bg: "linear-gradient(#93f274, #5fcb44)", art: <Numbers /> },
  { name: "pages", bg: "linear-gradient(#f3b049, #ee8b34)", art: <Pages /> },
  { name: "appstore", bg: "linear-gradient(#4fb2f2, #2556d8)", art: <AppStore /> },
  { name: "settings", bg: "linear-gradient(#d3d9e0, #8d8d8d)", art: <Settings />, badge: "2" },
  { name: "spotify", bg: "transparent", flat: true, art: <Spotify /> },
  { name: "excel", art: <Office letter="X" c={["#5cba7d", "#459c67", "#37774b", "#2b5a3b", "#357a47"]} /> },
  { name: "word", art: <Office letter="W" c={["#5a9fe6", "#4278cf", "#2d58b8", "#1d3d8b", "#2a5bbd"]} /> },
  { name: "chrome", bg: "#fdf6f4", art: <ChromeIcon />, dot: true },
  { name: "orb", bg: "transparent", flat: true, art: <Orb /> },
  { name: "arc", bg: "#fad2ca", art: <Arc /> },
  { name: "notion", bg: "transparent", flat: true, art: <NotionIcon /> },
  { name: "figma", bg: "linear-gradient(#2a211f, #16181a)", art: <FigmaIcon /> },
  { name: "vscode", art: <VsCode />, dot: true },
  { name: "slack", art: <Art><SlackShape /></Art>, dot: true },
];

const dbApps: DockApp[] = [
  { name: "postgres", bg: "linear-gradient(#e6eaef, #c7d0dc)", art: <Postgres /> },
  { name: "elephant", bg: "linear-gradient(#fff, #e9e9e9)", art: <BlueElephant /> },
  { name: "clock", bg: "#3878e6", art: <BlueClock /> },
];

const DockIcon = ({ app }: { app: DockApp }) => (
  <DockSlot>
    <Tile $bg={app.bg} $flat={app.flat}>{app.art}</Tile>
    {app.dot && <RunningDot />}
    {app.badge && <Badge>{app.badge}</Badge>}
  </DockSlot>
);

/* ---------- data ---------- */

const menus: [string, number, number][] = [
  ["Chrome", 142, 0.58], ["Archivio", 137, -0.57], ["Modifica", 144.5, -0.29], ["Visualizza", 160.5, -0.35],
  ["Cronologia", 172, -0.03], ["Preferiti", 136, 0], ["Profili", 110.5, 0.04], ["Scheda", 131.5, 0.05], ["Finestra", 139, 0.2], ["Guida", 90, 0],
];

type MenuRow = { t: string; sub?: boolean; tone?: "active" | "off"; ls?: number };
const sidebarMenu: MenuRow[] = [
  { t: "Scelta Posizione" }, { t: "Anagrafica" }, { t: "Posizione Assicurativa" },
  { t: "Estratto Conto", sub: true, ls: -0.15 }, { t: "Versamenti", sub: true }, { t: "Dati del modello F24", sub: true, tone: "active", ls: -0.13 },
  { t: "Estratto Debitorio", sub: true, ls: -0.15 }, { t: "Ruoli/Avvisi di Addebito", sub: true, ls: 0.18 },
  { t: "Avvisi Bonari - Com. di\nDebito - Codeline per\nregolarizzazione", sub: true, ls: -0.05 }, { t: "Dilazioni", sub: true },
  { t: "Estratto Conto Art. e\nCom.", tone: "off", ls: -0.12 }, { t: "Utilita'" }, { t: "Deleghe Ricevute", tone: "off", ls: -0.1 },
  { t: "Deleghe Rilasciate", ls: -0.1 }, { t: "Indicazione Delegante", tone: "off" }, { t: "Calcolo Codeline", ls: -0.08 },
  { t: "Domande telematizzate", ls: -0.07 }, { t: "Esonero contributivo\nart.1, co 20-22bis\nL.178/2020", ls: -0.03 },
  { t: "Comunicazione\nbidirezionale" }, { t: "Help-Contatti" },
];

type Field = { label: string; lw: number; ll: number; lls: number; value: string; vw?: number; vl: number; vls: number; gap?: number };
const subject: Field[] = [
  { label: "Cognome:", lw: 204, ll: 12, lls: 0.07, value: "FERRANTI", vw: 637, vl: 2, vls: 0.7, gap: 29 },
  { label: "Nome:", lw: 120, ll: 12, lls: 0.3, value: "GIAMMARCO GIOVANNI", vw: 637, vl: 2, vls: 0.65, gap: 29 },
  { label: "Data Nascita:", lw: 231, ll: 12, lls: 0, value: "20/09/2001", vw: 203, vl: 2, vls: 0.5, gap: 29 },
  { label: "CF:", lw: 77, ll: 12, lls: 1, value: "FRRGMR01P20L424O", vl: 2, vls: -0.05 },
];
const company: Field[] = [
  { label: "Matricola:", lw: 182, ll: 6, lls: -0.04, value: "21591828", vw: 177, vl: 1, vls: 0.13, gap: 27 },
  { label: "Tipo Soggetto:", lw: 205, ll: 5, lls: -0.13, value: "10\u00a0 Titolare", vw: 254, vl: 1, vls: 0.27, gap: 25 },
  { label: "Titolare Azienda", lw: 212, ll: 5, lls: -0.08, value: "FERRANTI GIAMMARCO GIOVANNI", vw: 507, vl: 15, vls: 0.58, gap: 24 },
  { label: "Indirizzo Azienda", lw: 224, ll: 5, lls: 0.25, value: "VIA ZANELLA 60 34127 TRIESTE", vl: 17, vls: 0.3 },
];

const FieldRow = ({ title, ls, fields }: { title: string; ls: number; fields: Field[] }) => (
  <DataRow>
    <RowTitle $ls={ls}>{title}</RowTitle>
    <Fields>
      {fields.map((f, i) => (
        <React.Fragment key={f.label}>
          <FieldLabel $w={f.lw} $first={i === 0}><Marker /><LabelText $l={f.ll} $ls={f.lls}>{f.label}</LabelText></FieldLabel>
          <FieldValue $w={f.vw} $l={f.vl} $ls={f.vls}>{f.value}</FieldValue>
          {f.gap && <FieldGap $w={f.gap} />}
        </React.Fragment>
      ))}
    </Fields>
  </DataRow>
);

export default function App() {
  return (
    <Desktop>
      <GlobalStyle />
      <MenuBar>
        <AppleMark><FaApple size={34} /></AppleMark>
        {menus.map(([t, w, ls], i) => <MenuItem key={t} $w={w} $ls={ls} $bold={i === 0}>{t}</MenuItem>)}
        <StatusArea>
          <Battery /><Wifi /><Magnifier /><ControlCentre /><Siri />
          <Clock>{"Mar 16 apr\u00a0 17:31"}</Clock>
        </StatusArea>
      </MenuBar>

      <Window>
        <TabStrip>
          <Lights><Light $c="#ed6a5e" $b="#d65a4e" /><Light $c="#f5bf4f" $b="#dba53d" /><Light $c="#61c454" $b="#4fac43" /></Lights>
          <Tab $w={428}><Fiscozen /><TabTitle $w={300} $ls={0.15}>Fiscozen</TabTitle><TabClose /></Tab>
          <TabRule $l={24} $r={20} />
          <Tab $w={428}><FavBox><MdPublic size={34} color="#5f6368" /></FavBox><TabTitle $w={336} $ls={0.5} $fade>2018.11.02 - INPS artigiani e commercianti</TabTitle><TabClose /></Tab>
          <Tab $w={464} $active><InpsMark /><TabTitle $w={333} $ls={0.05} $fade>Cassetto previdenziale (Artigiani e Commercianti)</TabTitle><TabClose /></Tab>
          <Tab $w={428}><FavBox $bg="#fff" $round><GoogleMark /></FavBox><TabTitle $w={336} $ls={0.12} $fade>fare screenshot mac - Cerca con Google</TabTitle><TabClose /></Tab>
          <TabRule $l={24} $r={18} />
          <MdAdd size={30} />
          <TabSearch>
            <svg width="18" height="12" viewBox="0 0 18 12"><path d="M2 2l7 7 7-7" fill="none" stroke="currentColor" strokeWidth="3.200" /></svg>
          </TabSearch>
        </TabStrip>

        <Toolbar>
          <NavIcon $w={71}><MdArrowBack size={34} /></NavIcon>
          <NavIcon $w={75} $dim><MdArrowForward size={34} /></NavIcon>
          <NavIcon $w={68}><Reload /></NavIcon>
          <Omnibox>
            <SiteInfo><Tune /></SiteInfo>
            <Url>https://<b>serviziweb2.inps.it</b>/CassettoPrevidenzialeArtCommInternet/menuController.do?id=-939245217#</Url>
            <MdStarBorder size={38} />
          </Omnibox>
          <Extensions>
            <ExtSlot $w={79}><Fox /></ExtSlot>
            <ExtSlot $w={66}><Dropper /></ExtSlot>
            <ExtSlot $w={73}><FsBadge>FS</FsBadge></ExtSlot>
            <ExtSlot $w={68}><Puzzle /></ExtSlot>
            <ToolRule $l={0} $r={32} />
            <Avatar>G</Avatar>
            <ExtSlot $w={90}><svg width="90" height="34"><g fill="#474747"><circle cx="52" cy="6" r="3.300" /><circle cx="52" cy="17" r="3.300" /><circle cx="52" cy="28" r="3.300" /></g></svg></ExtSlot>
          </Extensions>
        </Toolbar>

        <Page>
          <Breadcrumb>
            <FaHome size={28} color="#3d6fd6" /><Slash $r={5}>/</Slash><CrumbLink>Tutti i servizi</CrumbLink><Slash>/</Slash>Cassetto previdenziale (Artigiani e Commercianti)
          </Breadcrumb>
          <Banner>
            <InpsCross />
            <BannerText>
              <BannerLine $l={0} $ls={0.9}>Cassetto Previdenziale</BannerLine>
              <BannerLine $l={5} $ls={0.7}>Artigiani &amp; Commercianti</BannerLine>
            </BannerText>
          </Banner>
          <InfoTable>
            <TopRow>
              <OpinionButton>Lasciaci la tua Opinione</OpinionButton>
              <TopLinks><TopLink $ls={0.6}>FaiDaTe</TopLink><TopLink $ls={-0.05}>Logout</TopLink></TopLinks>
            </TopRow>
            <FieldRow title="Dati Soggetto" ls={-0.15} fields={subject} />
            <FieldRow title="Dati Azienda" ls={0.1} fields={company} />
          </InfoTable>
          <Body>
            <Sidebar>
              <MenuHead><MenuHeadArt /><MenuTitle>MENU'</MenuTitle></MenuHead>
              <MenuList>
                {sidebarMenu.map((m) => (
                  <MenuEntry key={m.t} $sub={m.sub} $tone={m.tone}><Bullet /><EntryText $ls={m.ls ?? 0}>{m.t}</EntryText></MenuEntry>
                ))}
              </MenuList>
              <MenuFootArt />
            </Sidebar>
            <Notice>NON SONO PRESENTI MOD. F24 CON SCADENZA A PARTIRE DAL: 01/01/2024</Notice>
          </Body>
        </Page>
      </Window>

      <DockArea>
        <Dock>
          {apps.map((a) => <DockIcon key={a.name} app={a} />)}
          <DockRule $l={17} $r={13} />
          {dbApps.map((a) => <DockIcon key={a.name} app={a} />)}
          <DockRule $l={16} $r={14} />
          <DockSlot $w={73}><NotesThumb /></DockSlot>
          <DockSlot $w={75}><SlackThumb /></DockSlot>
          <DockSlot $w={70}><Trash /></DockSlot>
        </Dock>
      </DockArea>
    </Desktop>
  );
}
